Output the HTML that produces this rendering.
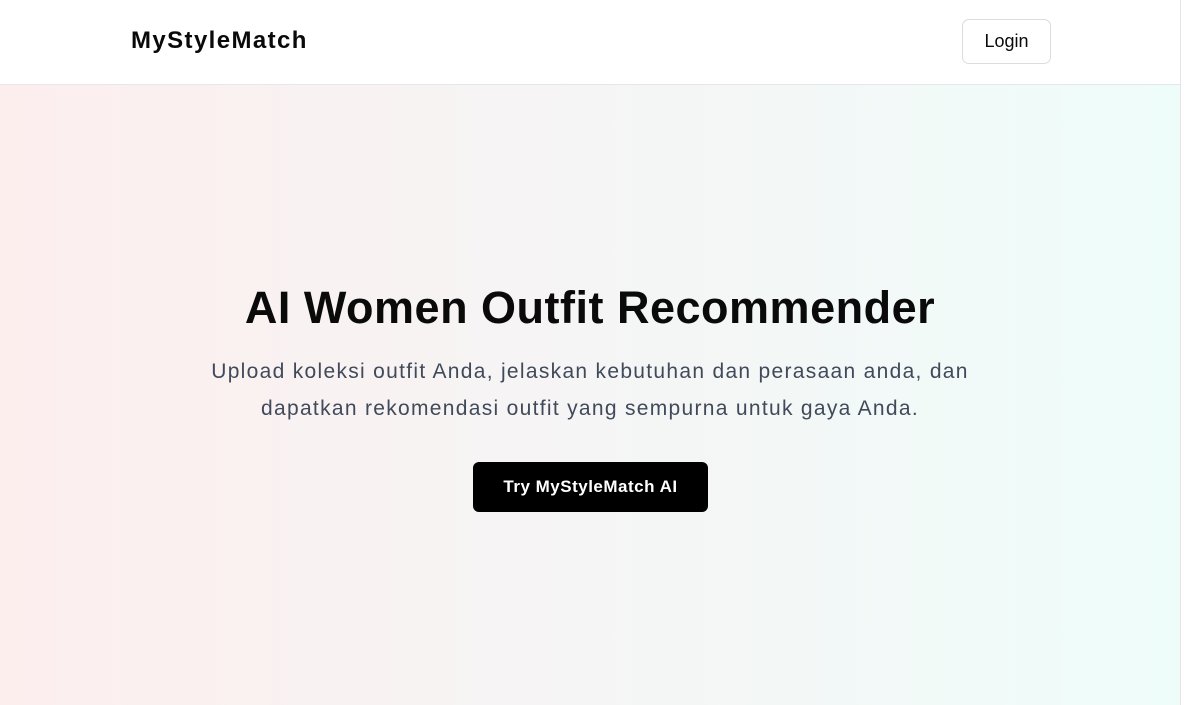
<!DOCTYPE html>
<html><head><style>
*{margin:0;padding:0;box-sizing:border-box}
body{width:1185px;height:705px;overflow:hidden;font-family:"Liberation Sans",sans-serif;background:#fff;position:relative}
.wrap{position:absolute;left:0;top:0;width:1181px;height:705px;border-right:1px solid #e5e5e5}
header{height:85px;border-bottom:1px solid #e5e7eb;background:#fff;position:relative}
.logo{position:absolute;left:131px;top:27px;font-size:24px;font-weight:bold;color:#0a0a0a;letter-spacing:1.4px}
.login{position:absolute;left:962px;top:19px;width:89px;height:45px;border:1px solid #dcdcdc;border-radius:7px;font-size:18px;display:flex;align-items:center;justify-content:center;color:#0a0a0a}
main{position:absolute;top:85px;left:0;right:0;bottom:0;background:linear-gradient(90deg,#fdeeee,#f5f5f5 50%,#effdfa)}
h1{position:absolute;top:197px;width:100%;text-align:center;font-size:45px;font-weight:bold;color:#0a0a0a;letter-spacing:0.5px}
p{position:absolute;top:268px;width:100%;text-align:center;font-size:21px;line-height:37px;color:#404a5a;letter-spacing:1.3px}
.btn{position:absolute;left:473px;top:377px;width:235px;height:50px;background:#000;border-radius:6px;color:#fff;font-size:17px;font-weight:bold;display:flex;align-items:center;justify-content:center;letter-spacing:0.5px}
</style></head><body><div class="wrap">
<header><div class="logo">MyStyleMatch</div><div class="login">Login</div></header>
<main><h1>AI Women Outfit Recommender</h1>
<p>Upload koleksi outfit Anda, jelaskan kebutuhan dan perasaan anda, dan<br>dapatkan rekomendasi outfit yang sempurna untuk gaya Anda.</p>
<div class="btn">Try MyStyleMatch AI</div></main>
</div></body></html>
